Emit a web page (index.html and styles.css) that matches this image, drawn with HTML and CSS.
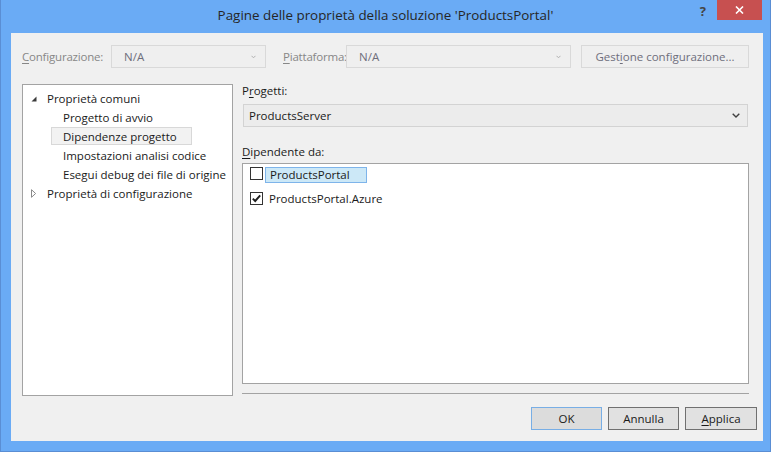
FILE: index.html
```html
<!DOCTYPE html>
<html lang="it">
<head>
<meta charset="utf-8">
<title>Pagine delle proprietà della soluzione</title>
<link rel="stylesheet" href="styles.css">
</head>
<body>
<div class="window">
  <div class="titlebar">
    <div class="title">Pagine delle proprietà della soluzione 'ProductsPortal'</div>
    <div class="caption-btns">
      <span class="help">?</span>
      <span class="close"><svg width="9" height="8" viewBox="0 0 9 8"><path d="M1 0.5 L8 7.5 M8 0.5 L1 7.5" stroke="#fff" stroke-width="1.6" fill="none"/></svg></span>
    </div>
  </div>
  <div class="client">
    <div class="toolbar">
      <span class="tb-label lbl-config"><u>C</u>onfigurazione:</span>
      <div class="combo combo-disabled combo-config"><span class="combo-text">N/A</span><svg class="chev" width="5" height="4" viewBox="0 0 5 4"><path d="M0.5 0.8 L2.5 2.8 L4.5 0.8" stroke="#b0b0b0" stroke-width="1" fill="none"/></svg></div>
      <span class="tb-label lbl-plat"><u>P</u>iattaforma:</span>
      <div class="combo combo-disabled combo-plat"><span class="combo-text">N/A</span><svg class="chev" width="5" height="4" viewBox="0 0 5 4"><path d="M0.5 0.8 L2.5 2.8 L4.5 0.8" stroke="#b0b0b0" stroke-width="1" fill="none"/></svg></div>
      <div class="btn btn-disabled btn-manager">Gest<u>i</u>one configurazione...</div>
    </div>
    <div class="main">
      <div class="tree">
        <div class="node top"><span class="toggle"><svg width="6" height="6" viewBox="0 0 6 6"><path d="M5.5 0.5 L5.5 5.5 L0.5 5.5 Z" fill="#3a3a3a"/></svg></span><span>Proprietà comuni</span></div>
        <div class="node child"><span class="item">Progetto di avvio</span></div>
        <div class="node child"><span class="item selected">Dipendenze progetto</span></div>
        <div class="node child"><span class="item">Impostazioni analisi codice</span></div>
        <div class="node child"><span class="item">Esegui debug dei file di origine</span></div>
        <div class="node top"><span class="toggle"><svg width="6" height="9" viewBox="0 0 6 9"><path d="M0.5 0.7 L4.6 4.5 L0.5 8.3 Z" fill="none" stroke="#8a8a8a" stroke-width="1"/></svg></span><span>Proprietà di configurazione</span></div>
      </div>
      <div class="pane">
        <div class="field-label">P<u>r</u>ogetti:</div>
        <div class="combo combo-proj"><span class="combo-text">ProductsServer</span><svg class="chev chev-dark" width="8" height="5" viewBox="0 0 8 5"><path d="M0.7 0.7 L4 4 L7.3 0.7" stroke="#404040" stroke-width="1.4" fill="none"/></svg></div>
        <div class="field-label dep-label"><u>D</u>ipendente da:</div>
        <div class="list">
          <div class="list-row row-edit"><span class="checkbox"></span><span class="edit">ProductsPortal</span></div>
          <div class="list-row row-check"><span class="checkbox"><svg width="11" height="11" viewBox="0 0 11 11"><path d="M1.8 5.6 L4.2 8 L9.2 2.4" stroke="#1e1e1e" stroke-width="1.9" fill="none"/></svg></span><span class="row-text">ProductsPortal.Azure</span></div>
        </div>
        <div class="separator"></div>
      </div>
    </div>
    <div class="buttons">
      <div class="btn btn-default">OK</div>
      <div class="btn">Annulla</div>
      <div class="btn btn-apply"><u>A</u>pplica</div>
    </div>
  </div>
</div>
</body>
</html>
```
FILE: styles.css
```css
* {
  box-sizing: border-box;
  margin: 0;
  padding: 0;
}

html, body {
  width: 771px;
  height: 452px;
  overflow: hidden;
}

body {
  font-family: "Open Sans", "Noto Sans", sans-serif;
  font-size: 11.5px;
  line-height: 15px;
  color: #1a1a1a;
  background: #6aabf5;
}

u {
  text-decoration: underline;
  text-decoration-thickness: 1px;
  text-underline-offset: 2px;
}

.window {
  width: 771px;
  height: 452px;
  background: #6aabf5;
  border: 1px solid #5a8ed4;
  border-top: none;
  display: flex;
  flex-direction: column;
  padding: 0 7px 10px 10px;
}

/* title bar */
.titlebar {
  height: 33px;
  margin: 0 -7px 0 -10px;
  display: grid;
  grid-template-columns: 1fr auto 1fr;
}

.title {
  grid-column: 2;
  font-size: 13.4px;
  line-height: 19px;
  padding-top: 6px;
  color: #262626;
  white-space: nowrap;
}

.caption-btns {
  grid-column: 3;
  justify-self: end;
  display: flex;
  align-items: flex-start;
  padding-right: 8px;
}

.help {
  font-weight: 700;
  font-size: 13px;
  line-height: 18px;
  padding-top: 2px;
  color: #454545;
  margin-right: 11px;
}

.close {
  width: 45px;
  height: 20px;
  background: #c75050;
  display: flex;
  align-items: center;
  justify-content: center;
}

/* client area */
.client {
  flex: 1;
  background: #f0f0f0;
  padding: 12px 6px 11px 11px;
  display: flex;
  flex-direction: column;
}

.toolbar {
  display: flex;
  align-items: center;
  height: 23px;
  margin-right: 8px;
}

.tb-label {
  color: #878787;
  white-space: nowrap;
  letter-spacing: -0.2px;
  flex-shrink: 0;
}

.lbl-config {
  width: 89px;
}

.lbl-plat {
  width: 63px;
  margin-left: 17px;
}

.combo {
  display: flex;
  align-items: center;
  height: 23px;
  border: 1px solid #d9d9d9;
  padding-left: 12px;
  flex-shrink: 0;
}

.combo-text {
  flex: 1;
}

.combo-disabled {
  background: #efefef;
  color: #6e6e7c;
}

.combo-config {
  width: 155px;
}

.combo-plat {
  width: 225px;
}

.chev {
  margin-right: 9px;
}

.chev-dark {
  margin-right: 7px;
}

.btn {
  height: 23px;
  width: 71px;
  border: 1px solid #707070;
  background: #e1e1e1;
  display: flex;
  align-items: center;
  justify-content: center;
  white-space: nowrap;
}

.btn-disabled {
  background: #efefef;
  border-color: #d9d9d9;
  color: #6e6e7c;
}

.btn-manager {
  width: 168px;
  margin-left: 10px;
}

/* main area */
.main {
  display: flex;
  gap: 9px;
  height: 312px;
  margin-top: 16px;
  margin-right: 8px;
}

.tree {
  width: 211px;
  background: #fff;
  border: 1px solid #a3a3a3;
  padding-top: 4px;
}

.node {
  height: 19px;
  display: flex;
  align-items: center;
  line-height: 19px;
  white-space: nowrap;
}

.node.top {
  padding-left: 8px;
}

.toggle {
  width: 16px;
  display: flex;
  align-items: center;
}

.node.child {
  padding-left: 28px;
}

.item {
  height: 18px;
  line-height: 17px;
  border: 1px solid transparent;
  padding: 0 14px 0 11px;
  align-self: flex-start;
}

.item.selected {
  background: #f2f2f2;
  border-color: #d8d8d8;
}

.pane {
  flex: 1;
  display: flex;
  flex-direction: column;
}

.field-label {
  margin-top: -1px;
  height: 15px;
}

.combo-proj {
  background: #ececec;
  border-color: #d3d3d3;
  color: #1a1a1a;
  padding-left: 5px;
  margin: 6px 1px 0;
}

.dep-label {
  margin-top: 17px;
}

.list {
  margin-top: 4px;
  height: 221px;
  background: #fff;
  border: 1px solid #a3a3a3;
  padding: 3px 0 0 7px;
}

.list-row {
  display: flex;
  align-items: flex-start;
}

.row-edit {
  height: 25px;
}

.checkbox {
  width: 13px;
  height: 13px;
  border: 1px solid #333;
  background: #fff;
  display: flex;
  align-items: center;
  justify-content: center;
}

.edit {
  margin-left: 2px;
  width: 102px;
  height: 16px;
  line-height: 14px;
  background: #cce8f7;
  border: 1px solid #7eb4ea;
  padding-left: 4px;
}

.row-text {
  margin-left: 6px;
  line-height: 13px;
}

.separator {
  margin-top: 9px;
  height: 1px;
  background: #a3a3a3;
}

/* bottom buttons */
.buttons {
  display: flex;
  justify-content: flex-end;
  gap: 6px;
  margin-top: 11px;
}

.btn-default {
  background: #dcdcdc;
  border-color: #78aee5;
}

.btn-apply {
  width: 72px;
}
```
